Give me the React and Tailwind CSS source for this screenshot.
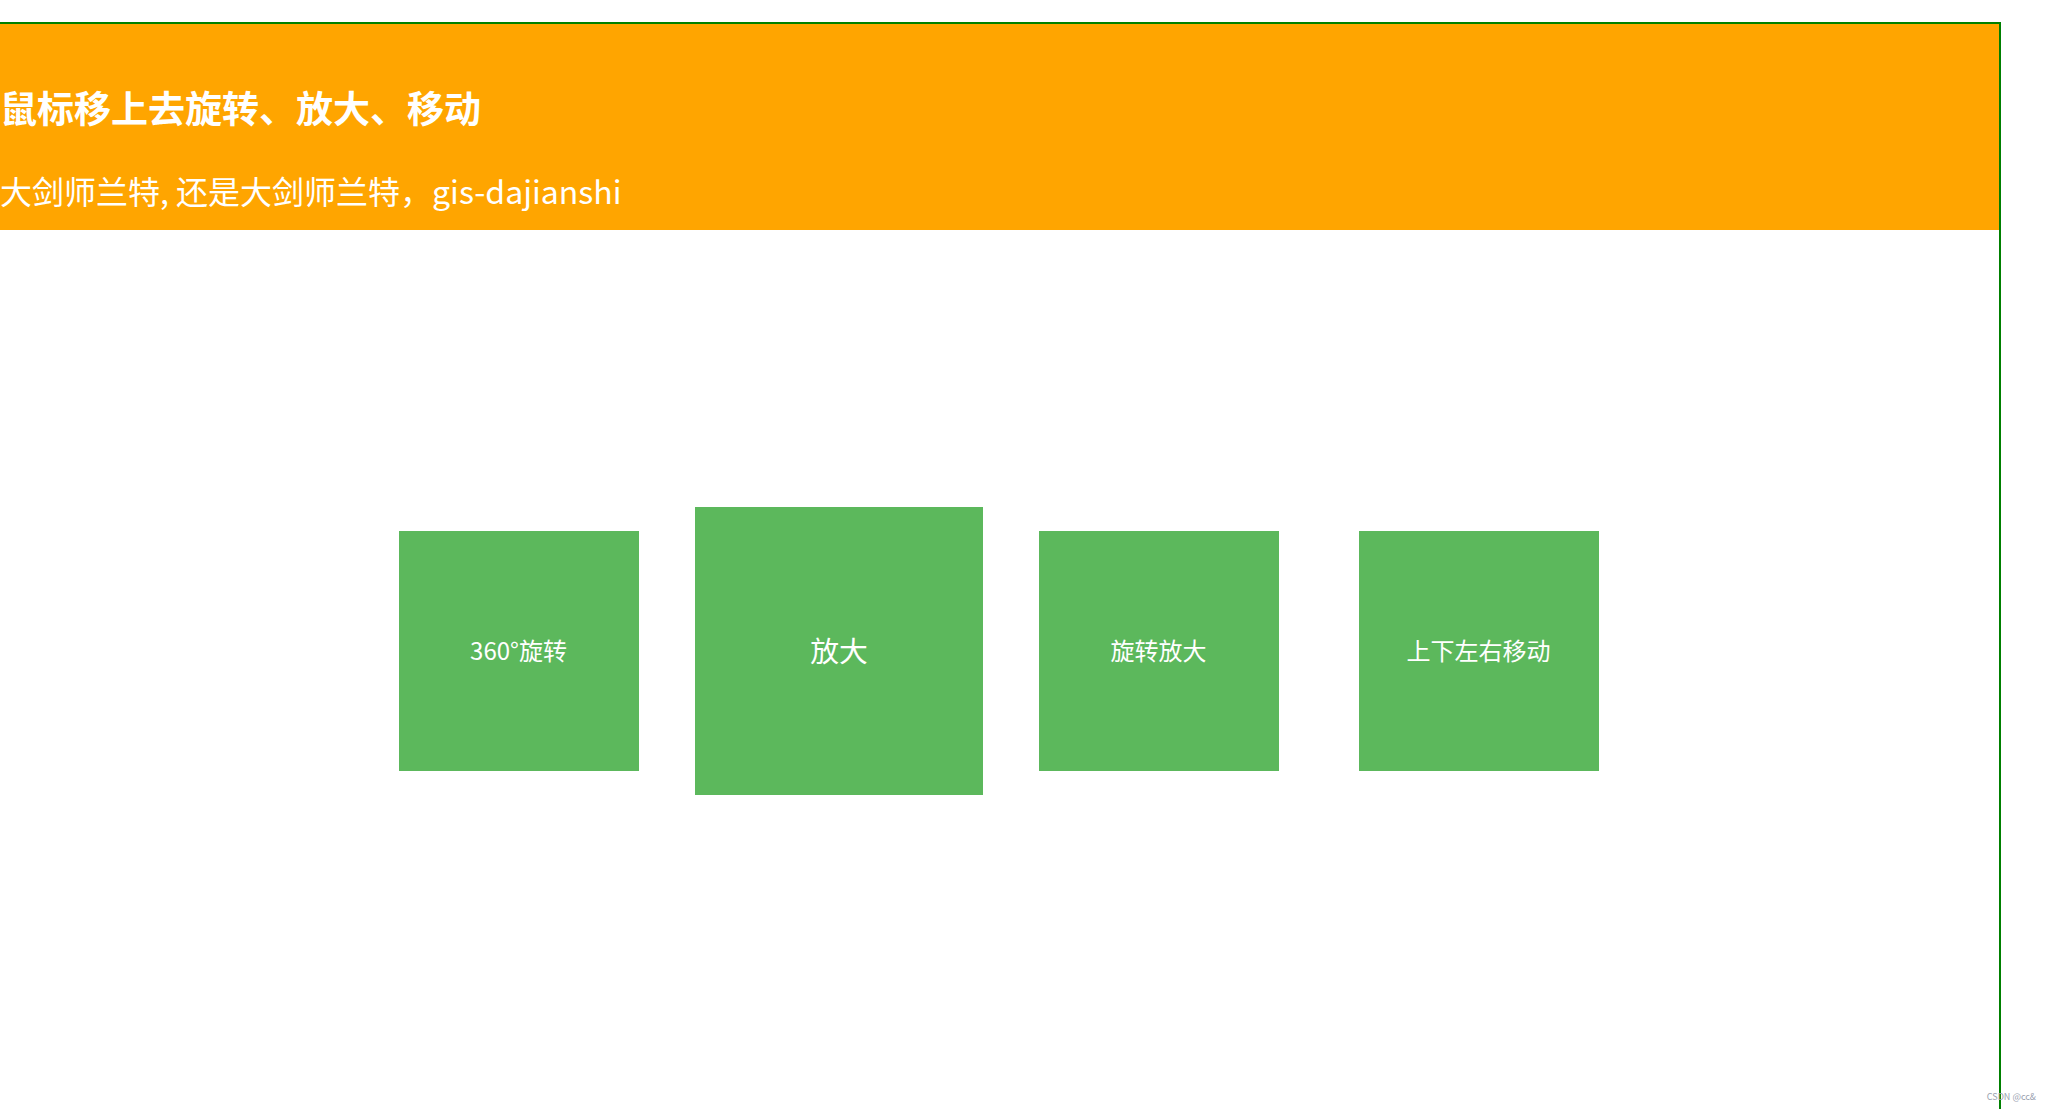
const font = { fontFamily: '"Noto Sans CJK SC", "Noto Sans", sans-serif' }

const cards = [
  { id: 1, label: "360°旋转", big: false },
  { id: 2, label: "放大", big: true },
  { id: 3, label: "旋转放大", big: false },
  { id: 4, label: "上下左右移动", big: false },
]

const App = () => {
  return (
    <div className="relative h-[1109px] w-full overflow-hidden bg-white" style={font}>
      <div className="ml-[-2px] mt-[22px] h-[1087px] w-[2003px] border-2 border-b-0 border-[#008000]">
        <header className="bg-[#ffa500] pt-[58px] pb-[20px] text-white">
          <h1 className="h-[50px] text-[37px] font-bold leading-[50px] whitespace-nowrap">
            鼠标移上去旋转、放大、移动
          </h1>
          <p className="mt-[38px] h-[40px] text-[32px] leading-[40px] whitespace-nowrap">
            大剑师兰特, 还是大剑师兰特，gis-dajianshi
          </p>
        </header>

        <div className="mt-[301px] mr-[2px] flex justify-center">
          {cards.map((card) => (
            <div
              key={card.id}
              className={`mx-10 flex h-[240px] w-[240px] items-center justify-center bg-[#5cb85c] pb-[2px] text-[24px] text-white ${
                card.big ? "scale-120" : ""
              }`}
            >
              {card.label}
            </div>
          ))}
        </div>
      </div>

      <span className="absolute right-[14px] bottom-[8px] text-[9px] leading-none text-gray-400">
        CSDN @cc&amp;
      </span>
    </div>
  )
}

export default App
